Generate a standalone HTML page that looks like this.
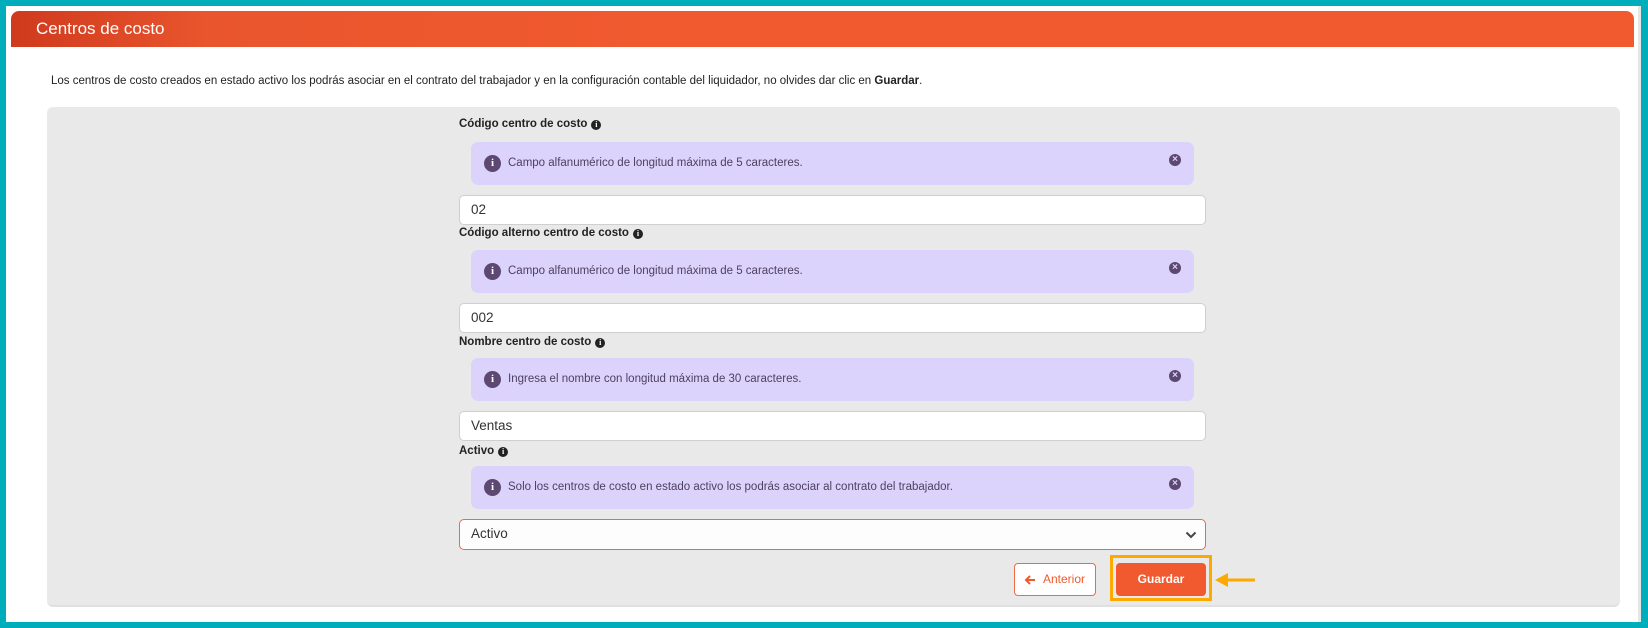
<!DOCTYPE html>
<html><head><meta charset="utf-8"><style>
*{box-sizing:border-box;margin:0;padding:0}
body{width:1648px;height:628px;background:#00adba;position:relative;overflow:hidden;font-family:"Liberation Sans",sans-serif}
.abs{position:absolute}
.panel{left:6px;top:6px;width:1635px;height:616px;background:#fff;border-right:3px solid #e6e6e6}
.hdr{left:11px;top:11px;width:1623px;height:36px;background:linear-gradient(90deg,#cf3a1e 0%,#e9552d 12%,#f15a2f 40%,#f15a2f 100%);border-radius:8px 8px 0 0;color:#fff;font-size:17px;line-height:36px;padding-left:25px}
.desc{left:51px;top:75px;font-size:11.5px;color:#222}
.gray{left:47px;top:107px;width:1573px;height:500px;background:#e9e9e9;border-radius:6px;border-bottom:2px solid #e0e0e0}
.lbl{left:459px;font-size:11.5px;font-weight:bold;color:#222}
.ii{display:inline-block;width:10px;height:10px;border-radius:50%;background:#222;color:#fff;font-size:8px;line-height:10px;text-align:center;vertical-align:0px;margin-left:4px;font-family:"Liberation Serif",serif;font-weight:bold}
.al{left:471px;width:723px;height:43px;background:#dbd3fb;border-radius:7px}
.al .ic{position:absolute;left:13px;top:13px;width:17px;height:17px;border-radius:50%;background:#5c4870;color:#fff;font-size:11px;line-height:17px;text-align:center;font-family:"Liberation Serif",serif;font-weight:bold}
.al .t{position:absolute;left:37px;top:15px;font-size:11.5px;color:#4e4060}
.al .x{position:absolute;right:13px;top:12px;width:12px;height:12px;border-radius:50%;background:#5c4870;color:#dbd3fb;font-size:10px;line-height:12px;text-align:center;font-weight:bold}
.in{left:459px;width:747px;height:30px;background:#fff;border:1px solid #cfcfcf;border-radius:5px;font-size:13.5px;color:#333;line-height:28px;padding-left:11px}
</style></head><body>
<div class="abs panel"></div>
<div class="abs hdr">Centros de costo</div>
<div class="abs desc">Los centros de costo creados en estado activo los podrás asociar en el contrato del trabajador y en la configuración contable del liquidador, no olvides dar clic en <b>Guardar</b>.</div>
<div class="abs gray"></div>

<div class="abs lbl" style="top:118px">Código centro de costo<span class="ii">i</span></div>
<div class="abs al" style="top:142px"><span class="ic">i</span><span class="t">Campo alfanumérico de longitud máxima de 5 caracteres.</span><span class="x">×</span></div>
<div class="abs in" style="top:195px">02</div>

<div class="abs lbl" style="top:227px">Código alterno centro de costo<span class="ii">i</span></div>
<div class="abs al" style="top:250px"><span class="ic">i</span><span class="t">Campo alfanumérico de longitud máxima de 5 caracteres.</span><span class="x">×</span></div>
<div class="abs in" style="top:303px">002</div>

<div class="abs lbl" style="top:336px">Nombre centro de costo<span class="ii">i</span></div>
<div class="abs al" style="top:358px"><span class="ic">i</span><span class="t">Ingresa el nombre con longitud máxima de 30 caracteres.</span><span class="x">×</span></div>
<div class="abs in" style="top:411px">Ventas</div>

<div class="abs lbl" style="top:445px">Activo<span class="ii">i</span></div>
<div class="abs al" style="top:466px"><span class="ic">i</span><span class="t">Solo los centros de costo en estado activo los podrás asociar al contrato del trabajador.</span><span class="x">×</span></div>
<div class="abs in" style="top:519px;height:31px;border-color:#ec6a47;background:#fdfdfd">Activo
<svg style="position:absolute;right:8px;top:11px" width="12" height="8" viewBox="0 0 12 8"><path d="M1.5 1.5L6 6L10.5 1.5" fill="none" stroke="#444" stroke-width="2"/></svg></div>

<div class="abs" style="left:1014px;top:563px;width:82px;height:33px;border:1px solid #ee6a47;border-radius:4px;background:#fff;color:#ee5a30;font-size:12px;line-height:31px;padding-left:28px">Anterior
<svg style="position:absolute;left:9px;top:11px" width="12" height="10" viewBox="0 0 12 10"><path d="M11 5H2M6 1L2 5L6 9" fill="none" stroke="#ee5a30" stroke-width="2"/></svg></div>
<div class="abs" style="left:1110px;top:555px;width:102px;height:46px;border:3px solid #fdaa00"></div>
<div class="abs" style="left:1116px;top:563px;width:90px;height:33px;background:#f15a2f;border-radius:4px;color:#fff;font-size:12px;font-weight:bold;line-height:33px;text-align:center">Guardar</div>
<svg class="abs" style="left:1213px;top:571px" width="44" height="18" viewBox="0 0 44 18"><path d="M14 9H42" stroke="#fdaa00" stroke-width="3"/><path d="M2 9L15 2V16Z" fill="#fdaa00"/></svg>
</body></html>
